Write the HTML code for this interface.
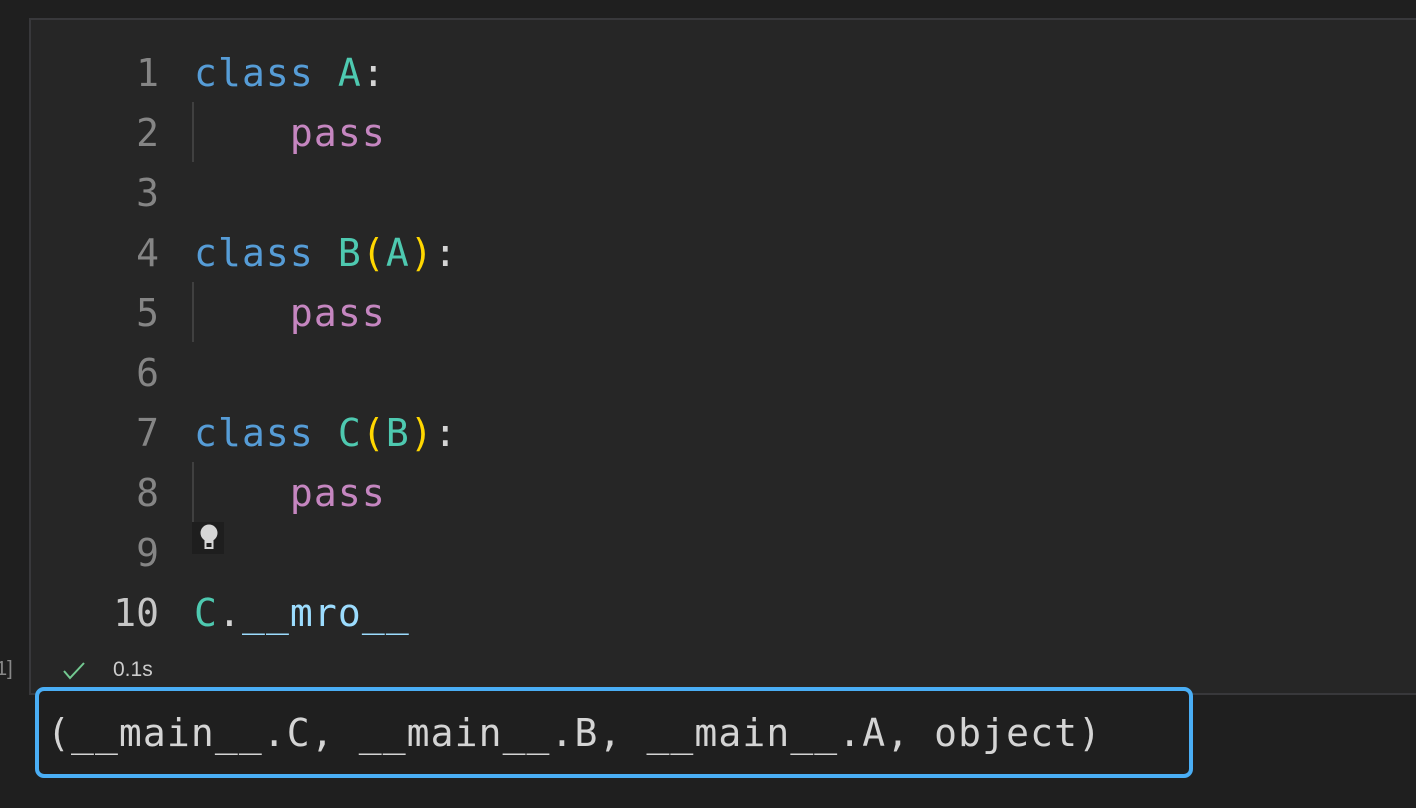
<!DOCTYPE html>
<html><head><style>
body{margin:0;width:1416px;height:808px;background:#1f1f1f;overflow:hidden;position:relative;font-family:"DejaVu Sans Mono","Liberation Mono",monospace}
.cell{position:absolute;left:29px;top:18px;width:1400px;height:673px;background:#262626;border:2px solid #38383b;border-right:none}
.ln{position:absolute;left:60px;width:99px;text-align:right;font-size:38px;color:#858585;line-height:60px}
.code{position:absolute;left:194px;font-size:38px;line-height:60px;white-space:pre;color:#d4d4d4;letter-spacing:1.1px}
.k{color:#569cd6}.c{color:#4ec9b0}.p{color:#c586c0}.y{color:#ffd700}.v{color:#9cdcfe}
.guide{position:absolute;left:192px;width:2px;background:#404040}
.out{position:absolute;left:35px;top:687px;width:1150px;height:83px;border:4px solid #4aaef5;border-radius:9px;background:#1f1f1f}
.out span{position:absolute;left:8px;top:12px;font-size:38px;line-height:60px;color:#d4d4d4;white-space:pre;letter-spacing:1.1px}
</style></head><body>
<div class="cell"></div>
<div class="guide" style="top:102px;height:60px"></div>
<div class="guide" style="top:282px;height:60px"></div>
<div class="guide" style="top:462px;height:60px"></div>
<div class="ln" style="top:43px">1</div>
<div class="ln" style="top:103px">2</div>
<div class="ln" style="top:163px">3</div>
<div class="ln" style="top:223px">4</div>
<div class="ln" style="top:283px">5</div>
<div class="ln" style="top:343px">6</div>
<div class="ln" style="top:403px">7</div>
<div class="ln" style="top:463px">8</div>
<div class="ln" style="top:523px">9</div>
<div class="ln" style="top:583px;color:#c6c6c6">10</div>
<div class="code" style="top:43px"><span class="k">class</span> <span class="c">A</span>:</div>
<div class="code" style="top:103px">    <span class="p">pass</span></div>
<div class="code" style="top:223px"><span class="k">class</span> <span class="c">B</span><span class="y">(</span><span class="c">A</span><span class="y">)</span>:</div>
<div class="code" style="top:283px">    <span class="p">pass</span></div>
<div class="code" style="top:403px"><span class="k">class</span> <span class="c">C</span><span class="y">(</span><span class="c">B</span><span class="y">)</span>:</div>
<div class="code" style="top:463px">    <span class="p">pass</span></div>
<div class="code" style="top:583px"><span class="c">C</span>.<span class="v">__mro__</span></div>
<div style="position:absolute;left:192px;top:522px;width:32px;height:32px;background:#1e1e1e"></div>
<svg style="position:absolute;left:198px;top:524px" width="22" height="26" viewBox="0 0 22 26"><circle cx="11" cy="9" r="8.5" fill="#d6d6d6"/><rect x="7" y="13" width="8" height="6" fill="#d6d6d6"/><rect x="7.5" y="17" width="7" height="7" fill="none" stroke="#d6d6d6" stroke-width="2"/></svg>
<div style="position:absolute;left:-4px;top:658px;font-size:20px;color:#888;font-family:'Liberation Sans',sans-serif">1]</div>
<svg style="position:absolute;left:62px;top:661px" width="24" height="20" viewBox="0 0 24 20"><path d="M2 10 L8 17 L22 2" fill="none" stroke="#73c991" stroke-width="2"/></svg>
<div style="position:absolute;left:113px;top:658px;font-size:21px;color:#cccccc;font-family:'Liberation Sans',sans-serif">0.1s</div>
<div class="out"><span>(__main__.C, __main__.B, __main__.A, object)</span></div>
</body></html>
